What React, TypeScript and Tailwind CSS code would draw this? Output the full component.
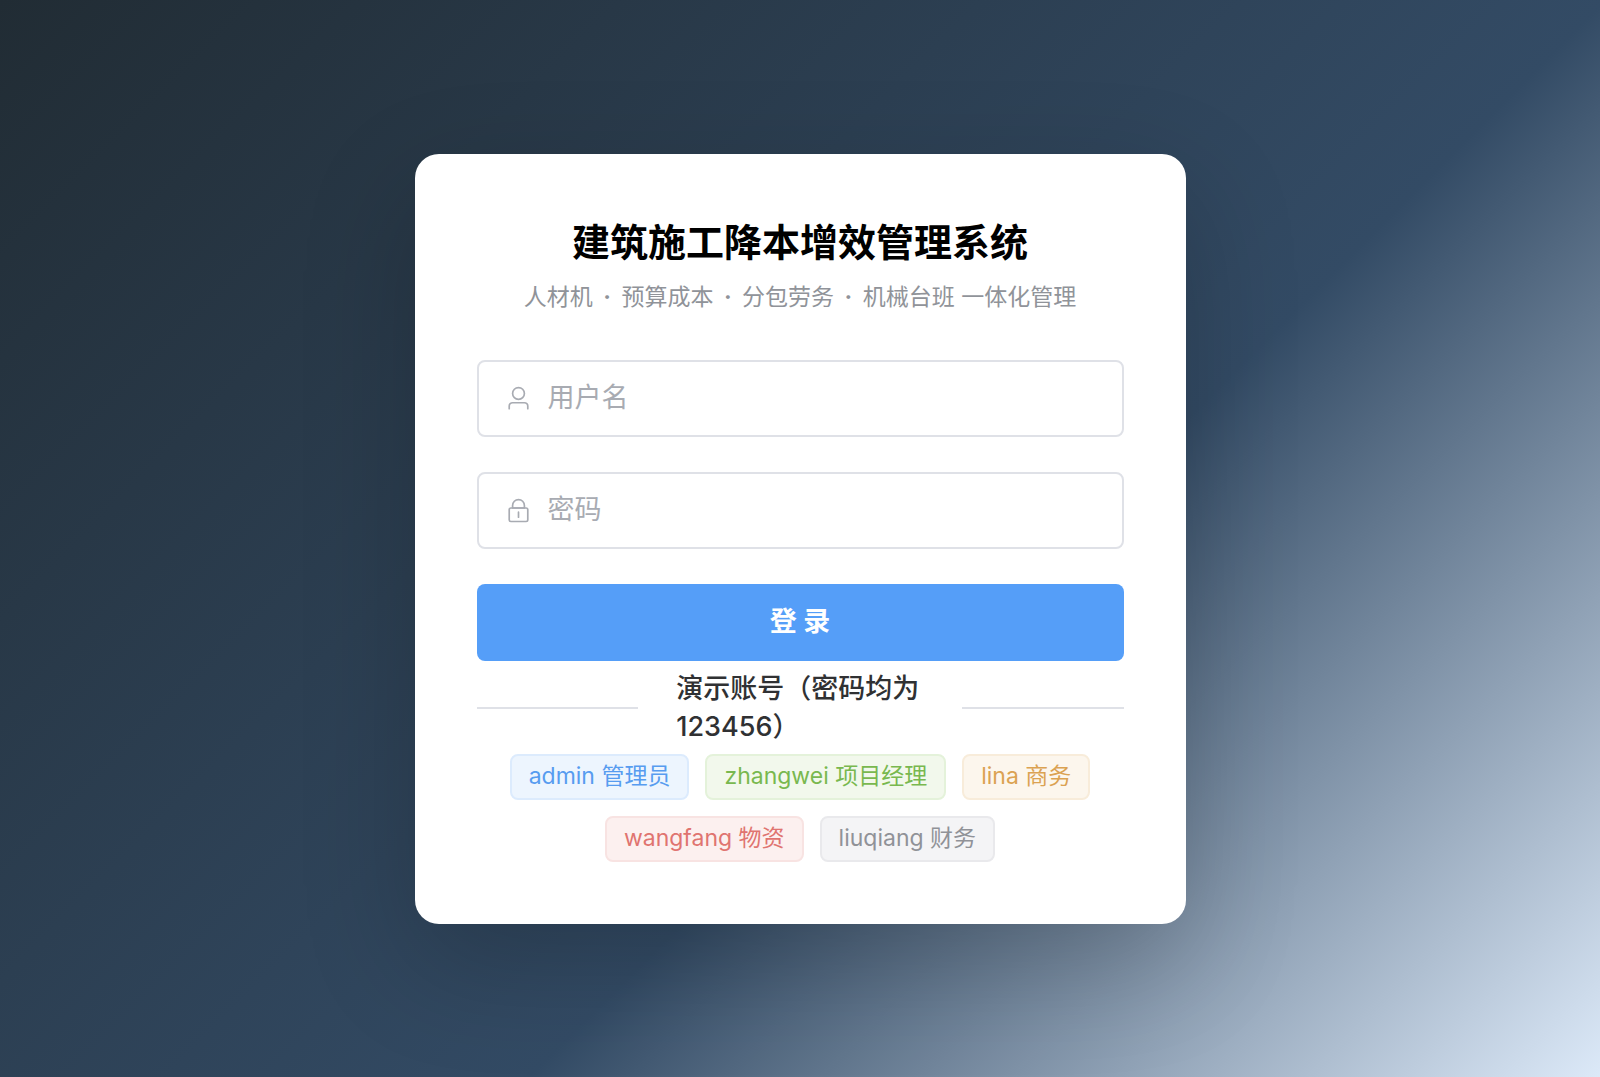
import { useState } from 'react';
import type { FormEvent } from 'react';

const accounts = [
  { username: 'admin', role: '管理员', style: 'bg-[#edf5fe] border-[#dcebfd] text-[#579cf0]' },
  { username: 'zhangwei', role: '项目经理', style: 'bg-[#f2f8ec] border-[#e4f2da] text-[#79b84f]' },
  { username: 'lina', role: '商务', style: 'bg-[#fcf6ed] border-[#f8ecda] text-[#dba252]' },
  { username: 'wangfang', role: '物资', style: 'bg-[#fcf0ef] border-[#f8e3e2] text-[#e07470]' },
  { username: 'liuqiang', role: '财务', style: 'bg-[#f4f4f6] border-[#e9e9ec] text-[#909298]' },
];

function UserIcon() {
  return (
    <svg viewBox="0 0 1024 1024" fill="currentColor" className="w-[27px] h-[27px] shrink-0" aria-hidden="true">
      <path d="M512 512a192 192 0 1 0 0-384 192 192 0 0 0 0 384m0 64a256 256 0 1 1 0-512 256 256 0 0 1 0 512m320 320v-96a96 96 0 0 0-96-96H288a96 96 0 0 0-96 96v96a32 32 0 1 1-64 0v-96a160 160 0 0 1 160-160h448a160 160 0 0 1 160 160v96a32 32 0 1 1-64 0" />
    </svg>
  );
}

function LockIcon() {
  return (
    <svg viewBox="0 0 1024 1024" fill="currentColor" className="w-[27px] h-[27px] shrink-0" aria-hidden="true">
      <path d="M224 448a32 32 0 0 0-32 32v384a32 32 0 0 0 32 32h576a32 32 0 0 0 32-32V480a32 32 0 0 0-32-32zm0-64h576a96 96 0 0 1 96 96v384a96 96 0 0 1-96 96H224a96 96 0 0 1-96-96V480a96 96 0 0 1 96-96" />
      <path d="M512 544a32 32 0 0 1 32 32v192a32 32 0 1 1-64 0V576a32 32 0 0 1 32-32m192-160v-64a192 192 0 1 0-384 0v64zM512 64a256 256 0 0 1 256 256v128H256V320A256 256 0 0 1 512 64" />
    </svg>
  );
}

function Dot() {
  return <span className="mx-1 font-bold">·</span>;
}

export default function App() {
  const [username, setUsername] = useState('');
  const [password, setPassword] = useState('');

  const handleSubmit = (e: FormEvent) => {
    e.preventDefault();
  };

  const fillAccount = (name: string) => {
    setUsername(name);
    setPassword('123456');
  };

  return (
    <main className="min-h-screen flex items-center justify-center bg-[linear-gradient(135deg,#212c34_0%,#334b65_60%,#dce9f8_100%)] font-['Inter','Noto_Sans_CJK_SC',sans-serif]">
      <div className="w-full max-w-[771px] bg-white rounded-3xl p-[62px] shadow-[0_39px_116px_rgba(0,0,0,0.2)]">

        {/* 标题 */}
        <div className="text-center mb-[46px]">
          <h1 className="text-[38px] leading-[52px] font-bold text-black">建筑施工降本增效管理系统</h1>
          <p className="mt-3 text-[23px] leading-[34px] text-[#909399]">
            人材机 <Dot /> 预算成本 <Dot /> 分包劳务 <Dot /> 机械台班 一体化管理
          </p>
        </div>

        {/* 登录表单 */}
        <form onSubmit={handleSubmit} className="flex flex-col gap-[35px]">
          <label className="flex items-center gap-4 h-[77px] px-[26px] border-2 border-[#dfe1e7] rounded-lg text-[#a8abb2]">
            <UserIcon />
            <input
              type="text"
              aria-label="用户名"
              placeholder="用户名"
              value={username}
              onChange={(e) => setUsername(e.target.value)}
              className="flex-1 min-w-0 bg-transparent outline-none text-[27px] text-[#606266] placeholder:text-[#a8abb2]"
            />
          </label>
          <label className="flex items-center gap-4 h-[77px] px-[26px] border-2 border-[#dfe1e7] rounded-lg text-[#a8abb2]">
            <LockIcon />
            <input
              type="password"
              aria-label="密码"
              placeholder="密码"
              value={password}
              onChange={(e) => setPassword(e.target.value)}
              className="flex-1 min-w-0 bg-transparent outline-none text-[27px] text-[#606266] placeholder:text-[#a8abb2]"
            />
          </label>
          <button type="submit" className="h-[77px] rounded-lg bg-[#559ef8] text-white text-[27px] font-bold">
            登 录
          </button>
        </form>

        {/* 演示账号 */}
        <div className="flex items-center mt-[9px] mb-2">
          <div className="flex-1 h-[2px] bg-[#dfe1e7]"></div>
          <p className="w-1/2 px-[38px] text-[27px] leading-[38px] font-medium text-[#303133]">演示账号（密码均为 123456）</p>
          <div className="flex-1 h-[2px] bg-[#dfe1e7]"></div>
        </div>
        <div className="flex flex-wrap justify-center gap-4">
          {accounts.map((a) => (
            <button
              key={a.username}
              type="button"
              onClick={() => fillAccount(a.username)}
              className={`h-[46px] px-[17px] border-2 rounded-lg text-[23px] leading-none ${a.style}`}
            >
              {a.username} {a.role}
            </button>
          ))}
        </div>
      </div>
    </main>
  );
}
